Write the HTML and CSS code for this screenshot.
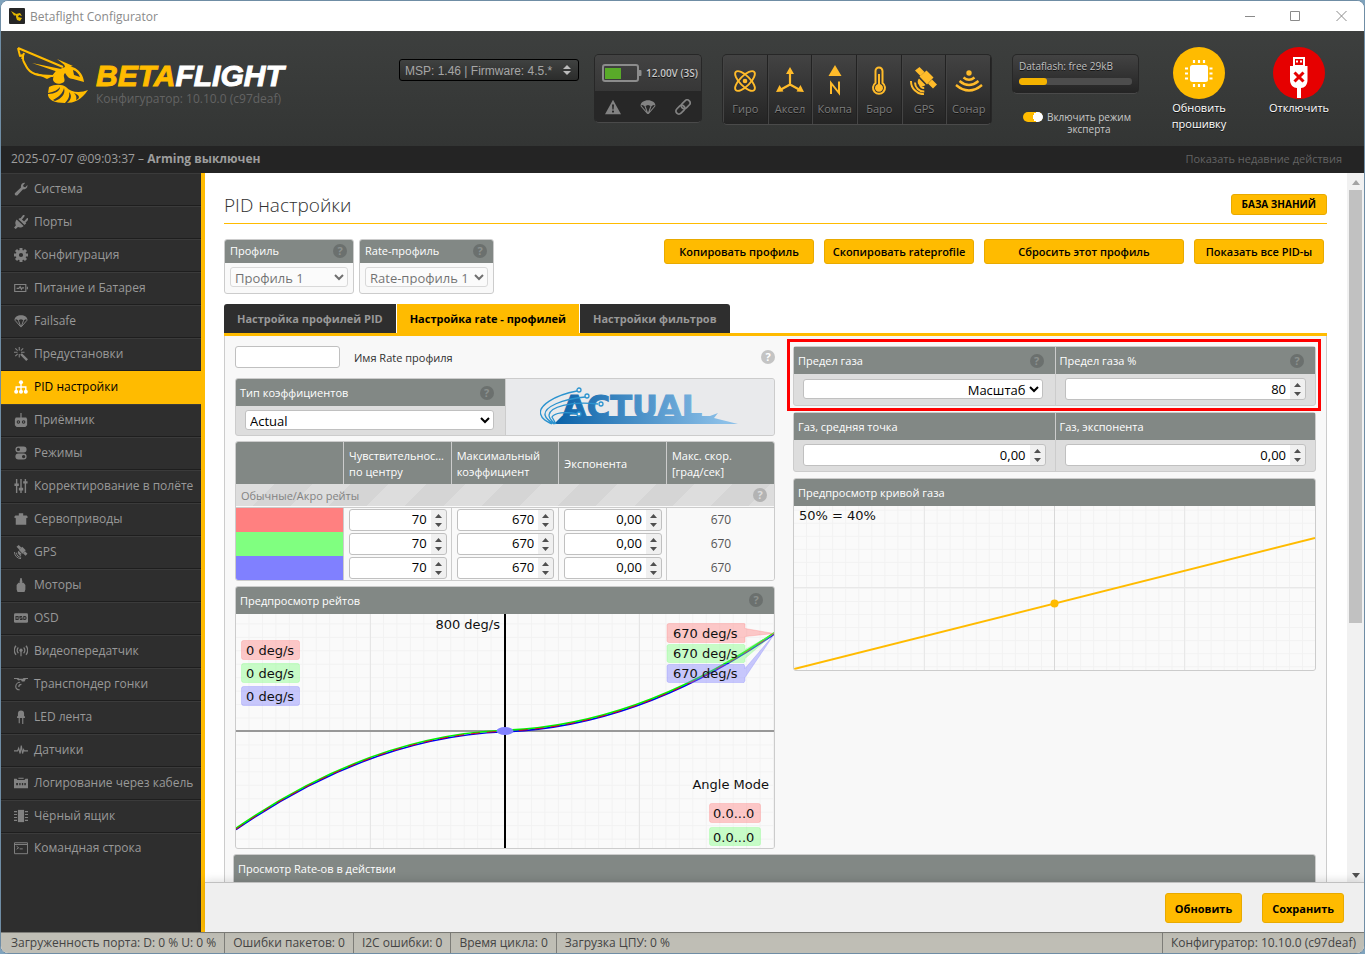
FILE: index.html
```html
<!DOCTYPE html>
<html lang="ru">
<head>
<meta charset="utf-8">
<title>Betaflight Configurator</title>
<link rel="stylesheet" href="styles.css">
</head>
<body>
<svg class="defs" aria-hidden="true">
  <defs>
    <symbol id="bee" viewBox="0 0 72 58">
      <path fill="none" stroke="#ffbb00" stroke-width="2" stroke-linejoin="round" d="M1 1 L46 20 M1 1 L3 9 L6 8 C5 15 8 16 9 19 C13 27 20 29 36 29 L40 24 M7 6 L5 12"/>
      <path fill="#ffbb00" d="M15 16 L44 22 L44 26 Z M34 30 L18 26 L30 32 Z M47 17 L58 21 C63 24 66 28 67 35 L56 32 C52 32 50 29 48 26 C45 29 49 32 47 35 C43 38 37 37 36 33 C36 27 41 22 48 20 Z M40 12 L56 19 L50 20 Z"/>
      <path fill="#383a39" d="M56 23 C59 24 62 27 63 30 L57 28 Z"/>
      <path fill="#ffbb00" d="M32 40 C38 37 45 37 49 40 C54 46 64 46 71 43 C64 53 58 56 48 56 C38 56 30 53 31 46 Z"/>
      <path fill="#383a39" d="M31 46 C37 45 41 43 43 40 C43 44 38 47 31 47 Z M36 53 C42 50 46 46 47 41 C49 47 44 52 38 54 Z M48 56 C51 53 53 49 52 45 C56 49 53 54 50 56 Z M59 53 C60 50 59 48 57 46 C62 48 63 50 61 52 Z"/>
    </symbol>
    <symbol id="i-wrench" viewBox="0 0 16 16"><path d="M1.2 12.6 8 6.2C7.300 3.200 9.500.6 12.700 1L10.400 3.600l.5 1.900 2 .4L15.300 3.500c.6 3.200-2 5.500-5 4.900L4 15C2.300 16.200-.2 14.400 1.200 12.600z"/></symbol>
    <symbol id="i-plug" viewBox="0 0 16 16"><path d="M3 5l8 7.500c-2 2-4.500 2.300-6.500 1.300L2 16l-2-1.500 2.200-2.700C1 9.500 1.300 7 3 5z"/><path d="M7.500 5.500 11 1M11.500 9 15.500 4.500" stroke="currentColor" stroke-width="2.200" stroke-linecap="round"/><path d="M5 4.500l7 7 2-2-7-6z"/></symbol>
    <symbol id="i-gear" viewBox="0 0 16 16"><circle cx="8" cy="8" r="4.200" fill="none" stroke="currentColor" stroke-width="3.600"/><path d="M8 0v3M8 13v3M0 8h3M13 8h3M2.300 2.300l2.200 2.200M11.500 11.500l2.200 2.200M13.700 2.300l-2.200 2.200M4.500 11.500l-2.200 2.200" stroke="currentColor" stroke-width="3.400"/></symbol>
    <symbol id="i-batt" viewBox="0 0 16 16"><path fill="none" stroke="currentColor" stroke-width="1.300" d="M.8 4h12.700v8H.8zM15.300 6.500v3M3 8.500h2.500L7 6.500l1.500 3 1-1.700h2"/></symbol>
    <symbol id="i-chute" viewBox="0 0 16 16"><path d="M.5 7C.5 3.500 4 1.300 8 1.300S15.500 3.500 15.500 7l-2-1-2.200 1.200L8 6 4.700 7.200 2.500 6z"/><path fill="none" stroke="currentColor" stroke-width="1.100" d="M1 7l6.500 7.500h1L15 7M5 7l2.700 7.500M11 7l-2.700 7.500"/></symbol>
    <symbol id="i-wand" viewBox="0 0 16 16"><path d="M8 8l7 7" stroke="currentColor" stroke-width="2.800"/><path d="M6 0v4M0 6h4M1.500 1.500l2.700 2.700M10.500 1.500 7.800 4.200M1.500 10.500l2.700-2.700M6 8v4M8 6h4" stroke="currentColor" stroke-width="1.200"/></symbol>
    <symbol id="i-tree" viewBox="0 0 16 16"><path fill="none" stroke="currentColor" stroke-width="1.600" d="M8 4v8M2.500 12V8h11v4"/><circle cx="8" cy="2.500" r="2.300"/><circle cx="2.500" cy="13.300" r="2.300"/><circle cx="8" cy="13.300" r="2.300"/><circle cx="13.500" cy="13.300" r="2.300"/></symbol>
    <symbol id="i-rx" viewBox="0 0 16 16"><path fill-rule="evenodd" d="M7.300 0h1.400v5H14l1 2v7l-2 2H3l-2-2V7l1-2h5.300zM5 8.300a2 2 0 1 0 0 4 2 2 0 0 0 0-4zm6 0a2 2 0 1 0 0 4 2 2 0 0 0 0-4z"/><circle cx="5" cy="10.300" r=".8"/><circle cx="11" cy="10.300" r=".8"/></symbol>
    <symbol id="i-modes" viewBox="0 0 16 16"><path fill-rule="evenodd" d="M5 .5h6a3.400 3.400 0 0 1 0 6.800H5A3.400 3.400 0 0 1 5 .5zm0 1.500a1.900 1.900 0 1 0 0 3.800A1.900 1.900 0 0 0 5 2zM5 8.700h6a3.400 3.400 0 0 1 0 6.800H5a3.400 3.400 0 0 1 0-6.800zm6 1.500a1.900 1.900 0 1 0 0 3.800 1.900 1.900 0 0 0 0-3.800z"/></symbol>
    <symbol id="i-sliders" viewBox="0 0 16 16"><path d="M3 0v16M8 0v16M13 0v16" stroke="currentColor" stroke-width="1.600"/><path d="M.5 5h5v3h-5zM5.500 10h5v3h-5zM10.500 2.500h5v2.500h-5z"/></symbol>
    <symbol id="i-servo" viewBox="0 0 16 16"><path d="M5.500 1.500h5V4h4L16 6l-2 1v7.500H2V7L0 6l1.500-2h4z"/></symbol>
    <symbol id="i-sat" viewBox="0 0 28 28"><path d="M5 3.500 9.500 0l5 5-4 4zM18 16.500l4-4 5 5-4 4z"/><path d="M9.500 9.500 16.500 3.500l7 7L17 17.500z"/><path fill="none" stroke="currentColor" stroke-width="2" d="M10 17a4 4 0 0 0 4.200 4M5 15.500a9 9 0 0 0 9.300 9M1 14a13 13 0 0 0 13 13.200"/><path d="M9 11.500l6.500 6.500a4.500 4.500 0 0 1-6.500-6.500z"/></symbol>
    <symbol id="i-motor" viewBox="0 0 16 16"><path d="M7.300 0h1.400l1 4.500-.7 1h2L13 8v5l-1 3H4l-1-3V8l2-2.500h2l-.7-1z"/></symbol>
    <symbol id="i-osd" viewBox="0 0 16 16"><rect y="2.500" width="16" height="11" rx="1.500"/><path fill="none" stroke="#2e2e2e" stroke-width="1.200" d="M2.300 6.200h2.400v3.600H2.300zM9.200 6.200H6.800V8h2.400v1.800H6.800M11.200 6.200h1.500l1 1v1.600l-1 1h-1.500z"/></symbol>
    <symbol id="i-vtx" viewBox="0 0 16 16"><circle cx="8" cy="7" r="1.800"/><path fill="none" stroke="currentColor" stroke-width="1.400" d="M8 7v7M5 4a4.500 4.500 0 0 0 0 6.500M11 4a4.500 4.500 0 0 1 0 6.500M2.300 2a8 8 0 0 0 0 10.500M13.700 2a8 8 0 0 1 0 10.500"/></symbol>
    <symbol id="i-race" viewBox="0 0 16 16"><path d="M0 1h5l1 1h4l1-1h5v1.300h-2.500L12 5H9L8 3.500 5 4 3 2.300H0z"/><path fill="none" stroke="currentColor" stroke-width="1.300" d="M7 6a5 5 0 0 0-5 5c0 2 2 4 4.500 3.500M8.500 8.500a3 3 0 0 0-3 3"/></symbol>
    <symbol id="i-led" viewBox="0 0 16 16"><path d="M4.500 7V4a3.500 3.500 0 0 1 7 0v3h1v2h-9V7z"/><path d="M6 9v6M10 9v7" stroke="currentColor" stroke-width="1.300"/></symbol>
    <symbol id="i-pulse" viewBox="0 0 16 16"><path fill="none" stroke="currentColor" stroke-width="1.300" d="M0 9h4l1.300-3L7 12 8.300 3l1.500 9 1.200-4.500.7 1.500H16"/></symbol>
    <symbol id="i-log" viewBox="0 0 16 16"><path fill-rule="evenodd" d="M0 3h3l1 1.500h8L13 3h3v11H0zM2.500 8v2.500h2V8zm3.500 0v2.500h1.500V8zm3 0v2.500h1.500V8zm2.800 0v2.500h1.700V8z"/><path d="M5 2h6v1.200H5z"/></symbol>
    <symbol id="i-chip" viewBox="0 0 16 16"><path d="M4.500 1h7v14h-7z"/><path stroke="currentColor" stroke-width="1.200" d="M0 3h3.500M0 6.300h3.500M0 9.600h3.500M0 13h3.500M12.500 3H16M12.500 6.300H16M12.500 9.600H16M12.500 13H16"/></symbol>
    <symbol id="i-cli" viewBox="0 0 16 16"><path fill="none" stroke="currentColor" stroke-width="1.100" d="M.6 2h14.800v12.500H.6zM.6 4h14.800M3 6l2.300 1.700L3 9.400M6.500 9h3.500"/></symbol>
    <symbol id="i-warn" viewBox="0 0 16 16"><path fill-rule="evenodd" d="M8 .7 16 15.300H0zM7 5.500l.4 5h1.200l.4-5zM8 11.500a1.100 1.100 0 1 0 0 2.200 1.100 1.100 0 0 0 0-2.200z"/></symbol>
    <symbol id="i-link" viewBox="0 0 16 16"><g fill="none" stroke="currentColor" stroke-width="1.700" transform="rotate(-45 8 8)"><rect x="-.8" y="5" width="10" height="6" rx="3"/><rect x="6.800" y="5" width="10" height="6" rx="3"/></g></symbol>
    <linearGradient id="actual-fill" gradientUnits="userSpaceOnUse" x1="15" y1="0" x2="185" y2="0"><stop offset="0" stop-color="#0a62a8"/><stop offset="1" stop-color="#8cc0e8"/></linearGradient>
    <pattern id="grid-rate" width="13.450" height="13.450" patternUnits="userSpaceOnUse" y="9.400"><path d="M13 0V13.450M0 .5H13.450" stroke="#f2f2f2" fill="none"/></pattern>
    <pattern id="grid-throttle" width="13.050" height="13.050" patternUnits="userSpaceOnUse" y="3.700"><path d="M12.500 0V13.050M0 .5H13.050" stroke="#f2f2f2" fill="none"/></pattern>
  </defs>
</svg>

<div class="window">
  <div class="titlebar">
    <svg class="app-icon" viewBox="0 0 16 16"><rect width="16" height="16" rx="1" fill="#262626"/><path d="M2 3l7 4-4 .5zM7 6l4-1 2 3-3-1-1 2 4 1-2 3-3-1-1-3z" fill="#e5b800"/></svg>
    <span class="app-name">Betaflight Configurator</span>
    <svg class="win-controls" viewBox="0 0 104 12"><path fill="none" stroke="#8a8a8a" d="M0 6.500h10M45.500 1.500h9v9h-9zM91.500 1l10 10M101.500 1l-10 10"/></svg>
  </div>

  <header class="header">
    <div class="logo">
      <svg class="bee"><use href="#bee"/></svg>
      <div class="brand">
        <div class="wordmark"><span class="gold">BETA</span>FLIGHT</div>
        <div class="version">Конфигуратор: 10.10.0 (c97deaf)</div>
      </div>
    </div>
    <select class="port" aria-label="Порт"><option>MSP: 1.46 | Firmware: 4.5.*</option></select>
    <div class="battery">
      <div class="battery-top">
        <svg class="batt-icon" viewBox="0 0 40 18"><rect x="1" y="1" width="35" height="16" rx="2" fill="none" stroke="#8c8c8c" stroke-width="2"/><path d="M37 6h1.500a1 1 0 0 1 1 1v4a1 1 0 0 1-1 1H37z" fill="#8c8c8c"/><rect x="3" y="4" width="16" height="11" fill="#59aa29"/></svg>
        <span>12.00V (3S)</span>
      </div>
      <div class="battery-bottom">
        <svg><use href="#i-warn"/></svg><svg><use href="#i-chute"/></svg><svg><use href="#i-link"/></svg>
      </div>
    </div>
    <div class="sensors">
      <div class="sensor"><svg viewBox="0 0 28 28"><g fill="none" stroke="currentColor" stroke-width="2"><ellipse cx="14" cy="14" rx="14" ry="5.500" transform="rotate(45 14 14)"/><ellipse cx="14" cy="14" rx="14" ry="5.500" transform="rotate(-45 14 14)"/></g><circle cx="14" cy="14" r="2.500"/></svg><span>Гиро</span></div>
      <div class="sensor"><svg viewBox="0 0 28 28"><path fill="none" stroke="currentColor" stroke-width="2.200" d="M14 5v12.500L4 23M14 17.500 24 23"/><path d="M14 0l4 7h-8zM0 25l3.500-7 4 6.500zM28 25l-3.500-7-4 6.500z"/></svg><span>Аксел</span></div>
      <div class="sensor"><svg viewBox="0 0 28 28"><path d="M14-2l6.500 11h-13z"/><path d="M10 27V16l8 10V14.500" fill="none" stroke="currentColor" stroke-width="2"/></svg><span>Компа</span></div>
      <div class="sensor"><svg viewBox="0 0 28 28"><path fill="none" stroke="currentColor" stroke-width="2" d="M10.500 16V4a3.500 3.500 0 0 1 7 0v12a6 6 0 1 1-7 0z"/><path d="M13 7h2v10a4 4 0 1 1-2 0z"/></svg><span>Баро</span></div>
      <div class="sensor"><svg><use href="#i-sat"/></svg><span>GPS</span></div>
      <div class="sensor"><svg viewBox="0 0 28 28"><circle cx="14" cy="6" r="2.700"/><path fill="none" stroke="currentColor" stroke-width="2.300" d="M8.500 10.500q5.500 4.500 11 0M4.500 14q9.500 8 19 0M1 18q13 11 26 0"/></svg><span>Сонар</span></div>
    </div>
    <div class="flash-col">
      <div class="dataflash"><span>Dataflash: free 29kB</span><div class="flash-bar"><div class="flash-fill"></div></div></div>
      <div class="expert"><input id="expert" class="toggle" type="checkbox" checked><label for="expert">Включить режим эксперта</label></div>
    </div>
    <div class="connect">
      <a href="#" class="big-btn">
        <svg viewBox="0 0 52 52"><circle cx="26" cy="26" r="26" fill="#ffbb00"/><g fill="#fff"><rect x="17" y="18" width="18" height="17" rx="2.500"/><path stroke="#fff" stroke-width="2.200" d="M21 13v3M26 13v3M31 13v3M21 37v3M26 37v3M31 37v3M12 21.500h3M12 26.500h3M12 31.500h3M36.500 21.500h3M36.500 26.500h3M36.500 31.500h3"/></g></svg>
        <span>Обновить прошивку</span>
      </a>
      <a href="#" class="big-btn">
        <svg viewBox="0 0 52 52"><circle cx="26" cy="26" r="26" fill="#e60000"/><path fill="#fff" fill-rule="evenodd" d="M20 10h12v9h2.500v14c0 5-3 8-6.500 8v10h-4V41c-3.500 0-7-3-7-8V19h3zM22 12v6h8v-6z"/><path fill="#fff" d="M23 13.500h2v2h-2zM27 13.500h2v2h-2z"/><path d="M21.500 25.500l9 9M30.500 25.500l-9 9" stroke="#e60000" stroke-width="3"/></svg>
        <span>Отключить</span>
      </a>
    </div>
  </header>

  <div class="logbar"><div>2025-07-07 @09:03:37 – <b>Arming выключен</b></div><a href="#">Показать недавние действия</a></div>

  <div class="main">
    <nav class="sidebar">
      <a href="#"><svg><use href="#i-wrench"/></svg>Система</a>
      <a href="#"><svg><use href="#i-plug"/></svg>Порты</a>
      <a href="#"><svg><use href="#i-gear"/></svg>Конфигурация</a>
      <a href="#"><svg><use href="#i-batt"/></svg>Питание и Батарея</a>
      <a href="#"><svg><use href="#i-chute"/></svg>Failsafe</a>
      <a href="#"><svg><use href="#i-wand"/></svg>Предустановки</a>
      <a href="#" class="active"><svg><use href="#i-tree"/></svg>PID настройки</a>
      <a href="#"><svg><use href="#i-rx"/></svg>Приёмник</a>
      <a href="#"><svg><use href="#i-modes"/></svg>Режимы</a>
      <a href="#"><svg><use href="#i-sliders"/></svg>Корректирование в полёте</a>
      <a href="#"><svg><use href="#i-servo"/></svg>Сервоприводы</a>
      <a href="#"><svg><use href="#i-sat"/></svg>GPS</a>
      <a href="#"><svg><use href="#i-motor"/></svg>Моторы</a>
      <a href="#"><svg><use href="#i-osd"/></svg>OSD</a>
      <a href="#"><svg><use href="#i-vtx"/></svg>Видеопередатчик</a>
      <a href="#"><svg><use href="#i-race"/></svg>Транспондер гонки</a>
      <a href="#"><svg><use href="#i-led"/></svg>LED лента</a>
      <a href="#"><svg><use href="#i-pulse"/></svg>Датчики</a>
      <a href="#"><svg><use href="#i-log"/></svg>Логирование через кабель</a>
      <a href="#"><svg><use href="#i-chip"/></svg>Чёрный ящик</a>
      <a href="#"><svg><use href="#i-cli"/></svg>Командная строка</a>
    </nav>

    <div class="page">
      <div class="scroller">
        <div class="content">
          <div class="title-row"><h1>PID настройки</h1><a href="#" class="wiki">БАЗА ЗНАНИЙ</a></div>

          <div class="top-row">
            <div class="profile">
              <label class="box-head" for="profile">Профиль<span class="help">?</span></label>
              <div class="profile-body"><select id="profile" disabled><option>Профиль 1</option></select></div>
            </div>
            <div class="profile rate">
              <label class="box-head" for="rate-profile">Rate-профиль<span class="help">?</span></label>
              <div class="profile-body"><select id="rate-profile" disabled><option>Rate-профиль 1</option></select></div>
            </div>
            <div class="actions">
              <button class="btn w150">Копировать профиль</button>
              <button class="btn w150">Скопировать rateprofile</button>
              <button class="btn w200">Сбросить этот профиль</button>
              <button class="btn w130">Показать все PID-ы</button>
            </div>
          </div>

          <div class="tabs">
            <button class="tab">Настройка профилей PID</button>
            <button class="tab current">Настройка rate - профилей</button>
            <button class="tab">Настройки фильтров</button>
          </div>

          <div class="panel">
            <div class="columns">
              <div class="col">
                <div class="name-row"><input id="rate-name" type="text"><label for="rate-name">Имя Rate профиля</label><span class="help light">?</span></div>
                <div class="box rate-type">
                  <div class="type-half">
                    <label class="box-head tall" for="rates-type">Тип коэффициентов<span class="help">?</span></label>
                    <div class="type-body"><select id="rates-type"><option>Actual</option></select></div>
                  </div>
                  <div class="type-logo">
                    <svg viewBox="0 0 200 40" width="200" height="40">
                      <path d="M14 37L22 29H170l8-3-4 5 24 6z" fill="url(#actual-fill)"/>
                      <text class="actual-text" x="22" y="31" fill="url(#actual-fill)" stroke="url(#actual-fill)">ACTUAL</text>
                      <g fill="none" stroke="#2b93cf" stroke-width="1.300"><path d="M37 4C15 8-3 19 1 28c1 4 5 6 11 9M45 10C22 12 4 20 5 28c1 4 4 6 9 9M58 17C30 14 10 20 9 28c0 4 3 6 6 9M37 27C26 24 14 26 12 30l4 7"/><g fill="#e9eaec"><circle cx="39" cy="3" r="2"/><circle cx="47" cy="9" r="2"/><circle cx="61" cy="17" r="2"/><circle cx="39" cy="27" r="2"/></g></g>
                    </svg>
                  </div>
                </div>

                <div class="box">
                  <table class="rates">
                    <thead>
                      <tr><th></th><th>Чувствительнос...<br>по центру</th><th>Максимальный<br>коэффициент</th><th>Экспонента</th><th>Макс. скор.<br>[град/сек]</th></tr>
                    </thead>
                    <tbody>
                      <tr class="stripe"><td colspan="5"><div class="stripe-in">Обычные/Акро рейты<span class="help light">?</span></div></td></tr>
                      <tr><td class="roll"></td><td><input class="num" aria-label="Roll чувствительность" value="70"></td><td><input class="num" aria-label="Roll максимум" value="670"></td><td><input class="num" aria-label="Roll экспонента" value="0,00"></td><td class="max">670</td></tr>
                      <tr><td class="pitch"></td><td><input class="num" aria-label="Pitch чувствительность" value="70"></td><td><input class="num" aria-label="Pitch максимум" value="670"></td><td><input class="num" aria-label="Pitch экспонента" value="0,00"></td><td class="max">670</td></tr>
                      <tr><td class="yaw"></td><td><input class="num" aria-label="Yaw чувствительность" value="70"></td><td><input class="num" aria-label="Yaw максимум" value="670"></td><td><input class="num" aria-label="Yaw экспонента" value="0,00"></td><td class="max">670</td></tr>
                    </tbody>
                  </table>
                </div>

                <div class="box">
                  <div class="box-head tall">Предпросмотр рейтов<span class="help">?</span></div>
                  <svg class="chart" viewBox="0 0 538 234">
                    <rect width="538" height="234" fill="#fafafa"/>
                    <rect width="538" height="234" fill="url(#grid-rate)"/>
                    <path d="M134.500 0v234M403.500 0v234" stroke="#e6e6e6"/>
                    <path d="M0 117h538" stroke="#989898" stroke-width="2"/>
                    <path d="M269 0v234" stroke="#000" stroke-width="2"/>
                    <g fill="none" stroke-width="1.600">
                      <path stroke="#0000f0" d="M0 215.700Q134.500 122.800 269 117.700Q403.500 112.600 538 20.200"/>
                      <path stroke="#00f000" d="M0 214.300Q134.500 121.400 269 116.300Q403.500 111.200 538 18.800"/>
                      <path stroke="#e00020" stroke-width="1" stroke-dasharray="9 7" d="M0 215.200Q134.500 122.300 269 117.200Q403.500 112.100 538 19.700"/>
                    </g>
                    <ellipse cx="269" cy="117" rx="8.500" ry="4" fill="#8080ff"/>
                    <g stroke-opacity=".3" fill-opacity=".42">
                      <g fill="#ff8080" stroke="#ff8080"><rect x="5.500" y="26.500" width="58" height="19" rx="2"/><path d="M433 9.500h75q1 0 1 1v4l29 5-29 3v5q0 1-1 1h-75q-2 0-2-2v-15q0-2 2-2z"/><rect x="473.500" y="189.500" width="51" height="19" rx="2"/></g>
                      <g fill="#80ff80" stroke="#80ff80"><rect x="5.500" y="49.500" width="58" height="19" rx="2"/><path d="M433 30.500h75l1 1v4l29-16-29 25v3l-1 1h-75q-2 0-2-2v-14q0-2 2-2z"/><rect x="473.500" y="213.500" width="51" height="18" rx="2"/></g>
                      <g fill="#8080ff" stroke="#8080ff"><rect x="5.500" y="72.500" width="58" height="19" rx="2"/><path d="M433 50.500h75l1 2v2l29-34-29 43v3l-1 2h-75q-2 0-2-2v-14q0-2 2-2z"/></g>
                    </g>
                    <g class="chart-text"><text x="264" y="15" text-anchor="end">800 deg/s</text><text x="10" y="41">0 deg/s</text><text x="10" y="64">0 deg/s</text><text x="10" y="87">0 deg/s</text><text x="437" y="24">670 deg/s</text><text x="437" y="44">670 deg/s</text><text x="437" y="64">670 deg/s</text><text x="533" y="175" text-anchor="end">Angle Mode</text><text x="477" y="204">0.0...0</text><text x="477" y="228">0.0...0</text></g>
                  </svg>
                </div>
              </div>

              <div class="col right">
                <div class="box pair marked">
                  <div class="cell"><label class="box-head tall" for="limit-type">Предел газа<span class="help">?</span></label><div class="cell-body"><select id="limit-type"><option>Масштаб</option></select></div></div>
                  <div class="cell"><label class="box-head tall" for="limit-pct">Предел газа %<span class="help">?</span></label><div class="cell-body"><input id="limit-pct" class="num" value="80"></div></div>
                </div>
                <div class="box pair">
                  <div class="cell"><label class="box-head tall" for="mid">Газ, средняя точка</label><div class="cell-body"><input id="mid" class="num" value="0,00"></div></div>
                  <div class="cell"><label class="box-head tall" for="expo">Газ, экспонента</label><div class="cell-body"><input id="expo" class="num" value="0,00"></div></div>
                </div>
                <div class="box">
                  <div class="box-head tall">Предпросмотр кривой газа</div>
                  <svg class="chart" viewBox="0 0 521 164">
                    <rect width="521" height="164" fill="#fafafa"/>
                    <rect width="521" height="164" fill="url(#grid-throttle)"/>
                    <path d="M130.500 0v164M390.500 0v164M0 81.500h521" stroke="#e8e8e8"/><path d="M260.500 0v164" stroke="#d8d8d8"/>
                    <path d="M0 163 521 32" stroke="#ffbb00" stroke-width="2"/><circle cx="260.500" cy="97.500" r="4" fill="#ffbb00"/>
                    <text class="chart-text" x="5" y="14">50% = 40%</text>
                  </svg>
                </div>
              </div>
            </div>
            <div class="box preview"><div class="box-head tall">Просмотр Rate-ов в действии</div><div class="preview-body"></div></div>
          </div>
        </div>
        <div class="scrollbar"><i class="up"></i><div class="thumb"></div><i class="down"></i></div>
      </div>
      <div class="toolbar"><button class="btn save">Обновить</button><button class="btn save">Сохранить</button></div>
    </div>
  </div>

  <footer class="statusbar">
    <span>Загруженность порта: D: 0 % U: 0 %</span><span>Ошибки пакетов: 0</span><span>I2C ошибки: 0</span><span>Время цикла: 0</span><span>Загрузка ЦПУ: 0 %</span><span class="last">Конфигуратор: 10.10.0 (c97deaf)</span>
  </footer>
</div>
</body>
</html>
```
FILE: styles.css
```css
* { box-sizing: border-box; }
body { margin: 0; background: #7fa3bd; font-family: "Open Sans", "Noto Sans", sans-serif; font-size: 12px; color: #303030; }
a { color: inherit; text-decoration: none; }
button, input, select { font-family: inherit; margin: 0; }
svg { fill: currentColor; }
.defs { position: absolute; width: 0; height: 0; }

.window { height: 100vh; display: flex; flex-direction: column; border: 1px solid #6f8da5; border-radius: 8px; overflow: hidden; background: #fff; }

.titlebar { flex: none; height: 30px; display: flex; align-items: center; padding: 0 15px 0 8px; background: #fff; color: #8a8a8a; }
.app-icon { width: 16px; height: 16px; margin-right: 5px; }
.app-name { flex: 1; }
.win-controls { width: 104px; height: 12px; }

.header { flex: none; height: 115px; display: flex; align-items: flex-start; padding: 16px 25px 0 16px; background: linear-gradient(#3d3f3e, #333534); }
.logo { flex: 1; display: flex; gap: 7px; }
.bee { width: 72px; height: 58px; flex: none; }
.brand { padding-top: 14px; }
.wordmark { font: italic bold 30px/30px "Liberation Sans", Arial, sans-serif; color: #fff; -webkit-text-stroke: 1px currentColor; }
.gold { color: #ffbb00; }
.version { line-height: 16px; color: #636363; white-space: nowrap; }
.port { appearance: none; width: 180px; height: 22px; margin: 12px 15px 0 0; padding: 1px 5px 0; border: 1px solid #000; border-radius: 3px; color: #a6a6a6; font: 12px "Liberation Sans", Arial, sans-serif; background: url("data:image/svg+xml,%3Csvg xmlns='http://www.w3.org/2000/svg' width='10' height='12'%3E%3Cpath d='M1 5l4-4 4 4zM1 7l4 4 4-4z' fill='%23bbb'/%3E%3C/svg%3E") no-repeat right 6px center, linear-gradient(#404241, #2b2c2b); }

.battery { width: 108px; margin: 7px 20px 0 0; border: 1px solid #272727; border-bottom-color: #4a4a4a; border-radius: 5px; overflow: hidden; }
.battery-top { height: 36px; display: flex; align-items: center; gap: 4px; padding-left: 7px; background: linear-gradient(#434343, #373737); color: #c8c8c8; font-size: 10px; font-weight: 600; white-space: nowrap; text-shadow: 0 1px #111; }
.batt-icon { width: 40px; height: 18px; flex: none; }
.battery-bottom { height: 31px; display: flex; align-items: center; justify-content: space-around; background: #272727; color: #828282; }
.battery-bottom svg { width: 16px; height: 16px; overflow: visible; }

.sensors { display: flex; width: 270px; margin: 7px 20px 0 0; border: 1px solid #272727; border-bottom-color: #4a4a4a; border-radius: 5px; background: linear-gradient(#434343, #242424); overflow: hidden; }
.sensor { flex: 1; min-width: 0; height: 69px; padding: 12px 0 0; display: flex; flex-direction: column; align-items: center; color: #ffbb2a; border-right: 1px solid #222; border-left: 1px solid #444; }
.sensor svg { width: 28px; height: 28px; overflow: visible; flex: none; }
.sensor:first-child svg { width: 26px; }
.sensor span { margin-top: 5px; line-height: 18px; color: #7d7d7d; font-size: 11px; text-shadow: 0 1px #111; }

.flash-col { width: 127px; margin: 7px 20px 0 0; }
.dataflash { height: 40px; padding: 4px 6px; border: 1px solid #272727; border-bottom-color: #4a4a4a; border-radius: 5px; background: linear-gradient(#434343, #242424); color: #c0c0c0; font-size: 10px; line-height: 15px; text-shadow: 0 1px #111; }
.flash-bar { height: 7px; margin-top: 4px; border-radius: 3px; background: #4d4d4d; overflow: hidden; }
.flash-fill { width: 25%; height: 100%; background: #f5b300; border-radius: 3px; }
.expert { display: flex; align-items: flex-start; gap: 2px; margin-top: 17px; padding-left: 11px; color: #c8c8c8; font-size: 10px; line-height: 12px; text-align: center; }
.expert label { width: 88px; }
.toggle { appearance: none; flex: none; width: 20px; height: 10px; margin-top: 1px; border-radius: 5px; background: radial-gradient(circle at 15px 5px, #fff 5px, transparent 5px), #ffbb00; }

.connect { display: flex; gap: 20px; }
.big-btn { width: 80px; display: flex; flex-direction: column; align-items: center; color: #fff; font-size: 11px; line-height: 16px; text-align: center; text-shadow: 0 1px #111; }
.big-btn svg { width: 52px; height: 52px; }
.big-btn span { margin-top: 1px; }

.logbar { flex: none; height: 27px; display: flex; justify-content: space-between; align-items: center; padding: 0 22px 2px 10px; background: #242424; color: #9d9d9d; }
.logbar a { color: #636363; font-size: 11px; }

.main { flex: 1; min-height: 0; display: flex; }
.sidebar { flex: none; width: 204px; background: #2e2e2e; border-right: 4px solid #ffbb00; overflow: hidden; }
.sidebar a { display: flex; align-items: center; gap: 6px; height: 33px; padding-left: 13px; padding-bottom: 2px; border-top: 1px solid #3b3b3b; border-bottom: 1px solid #1e1e1e; color: #999; font-size: 12px; white-space: nowrap; }
.sidebar a:last-child { height: 30px; border-bottom: 0; }
.sidebar svg { width: 14px; height: 14px; color: #828282; flex: none; }
.sidebar a.active { background: #ffbb00; border-color: #ffbb00; color: #000; }
.sidebar a.active svg { color: #fff; }

.page { flex: 1; min-width: 0; display: flex; flex-direction: column; }
.scroller { flex: 1; min-height: 0; display: flex; overflow: hidden; }
.content { flex: 1; min-width: 0; padding: 20px 20px 0 19px; }
.scrollbar { flex: none; width: 17px; display: flex; flex-direction: column; align-items: center; background: #f1f1f1; padding: 7px 0 4px; }
.scrollbar .thumb { width: 13px; height: 433px; margin: 5px 0 auto; background: #c1c1c1; }
.scrollbar i { border: 4px solid transparent; }
.scrollbar .up { border-top: 0; border-bottom: 5px solid #a3a3a3; }
.scrollbar .down { border-bottom: 0; border-top: 5px solid #505050; }

.title-row { display: flex; justify-content: space-between; align-items: flex-start; height: 31px; border-bottom: 1px solid #ffbb00; margin-bottom: 15px; }
h1 { margin: 0; font-size: 19px; font-weight: 300; line-height: 24px; color: #303030; }
.wiki { height: 21px; margin-top: 1px; padding: 0 10px; border: 1px solid #e8aa00; border-radius: 3px; background: #ffbb00; color: #000; font-size: 10px; font-weight: 700; line-height: 19px; }

.top-row { display: flex; align-items: flex-start; gap: 5px; margin-bottom: 10px; }
.profile { width: 130px; border: 1px solid #ccc; border-radius: 3px; overflow: hidden; background: #f9f9f9; }
.profile.rate { width: 135px; }
.box-head { display: flex; justify-content: space-between; align-items: center; height: 23px; padding: 0 6px 2px 5px; background: #828885; color: #fff; font-size: 11px; }
.box-head.tall { height: 27px; padding: 0 11px 0 4px; }
.help { display: inline-block; flex: none; width: 14px; height: 14px; border-radius: 7px; background: #6b706e; color: #8b918e; font-size: 11px; font-weight: 700; line-height: 14px; text-align: center; }
.help.light { background: #c4c4c4; color: #fff; }
.profile-body { height: 30px; padding: 4px 5px; }
select { height: 20px; padding: 0 0 1px; border: 1px solid #c0c0c0; border-radius: 3px; background: #fff; color: #000; font-size: 13px; }
.profile-body select { display: block; width: 100%; opacity: .55; background: #fdfdfd; }
.actions { margin-left: auto; display: flex; gap: 10px; padding-right: 3px; }
.btn { height: 25px; padding: 0; border: 1px solid #e8aa00; border-radius: 3px; background: #ffbb00; color: #000; font-size: 11px; font-weight: 600; white-space: nowrap; }
.w150 { width: 150px; } .w200 { width: 200px; } .w130 { width: 130px; }

.tabs { display: flex; gap: 1px; border-bottom: 3px solid #ffbb00; }
.tab { height: 29px; padding: 0 13px; border: 0; background: #2e2e2e; color: #999; font-size: 11px; font-weight: 700; white-space: nowrap; }
.tab:first-child { border-radius: 3px 0 0 0; }
.tab:last-child { border-radius: 0 3px 0 0; }
.tab.current { background: #ffbb00; color: #000; }

.panel { padding: 10px 10px 0; border: 1px solid #ccc; border-width: 0 1px; background: #f8f8f8; }
.columns { display: grid; grid-template-columns: minmax(0, 540fr) minmax(0, 523fr); gap: 18px; align-items: start; }
.col { display: flex; flex-direction: column; gap: 5px; }
.name-row { display: flex; align-items: center; height: 22px; margin-bottom: 5px; font-size: 11px; }
.name-row input { width: 105px; height: 22px; margin-right: 14px; border: 1px solid #c0c0c0; border-radius: 3px; }
.name-row .help { margin-left: auto; }
.box { border: 1px solid #ccc; border-radius: 3px; overflow: hidden; background: #ddd; }
.rate-type { display: flex; height: 58px; }
.type-half { flex: 1; border-right: 1px solid #ccc; }
.type-logo { flex: 1; display: flex; align-items: center; justify-content: center; background: #e9eaec; }
.actual-text { font: bold 32px "DejaVu Sans", sans-serif; stroke-width: 1px; }
.type-body { padding: 4px 11px 0 9px; }
.type-body select, .cell-body select { display: block; width: 100%; }

.rates { width: 100%; border-collapse: collapse; table-layout: fixed; background: #f9f9f9; }
.rates th { height: 42px; padding: 2px 5px 0; background: #828885; border-left: 1px solid #ccc; color: #fff; font-size: 11px; font-weight: 400; line-height: 16px; text-align: left; }
.rates th:first-child, .rates td:first-child { border-left: 0; }
.rates td { height: 24px; padding: 1px 4px 1px 5px; border-left: 1px solid #ccc; }
.rates .stripe td { height: 23px; padding: 0; border-bottom: 1px solid #ccc; }
.stripe-in { display: flex; justify-content: space-between; align-items: center; height: 22px; padding: 0 7px 0 5px; color: #828282; font-size: 11px; background: repeating-linear-gradient(135deg, #ddd 0 27px, #d5d5d5 27px 54px); }
.rates .help { background: #b3b3b3; color: #ddd; }
.rates .roll { background: #ff8080; } .rates .pitch { background: #80ff80; } .rates .yaw { background: #8080ff; }
.rates .max { text-align: center; color: #555; }
.num { display: block; width: 100%; height: 22px; padding: 0 19px 1px 2px; border: 1px solid #c0c0c0; border-radius: 3px; color: #000; font-size: 13px; text-align: right; background: url("data:image/svg+xml,%3Csvg xmlns='http://www.w3.org/2000/svg' width='15' height='20'%3E%3Cpath d='M0 0h15v20H0z' fill='%23f0f0f0'/%3E%3Cpath d='M4 8l3.500-4L11 8zM4 13l3.500 4L11 13z' fill='%23505050'/%3E%3C/svg%3E") no-repeat right center #fff; }
.chart { display: block; width: 100%; height: auto; }
.chart-text { font: 13px "DejaVu Sans", sans-serif; fill: #111; }

.right { gap: 6px; }
.pair { display: grid; grid-template-columns: 1fr 1fr; overflow: visible; }
.cell + .cell { border-left: 1px solid #ccc; }
.cell-body { height: 31px; padding: 4px 9px; }
.cell-body select { width: calc(100% - 3px); margin-top: 1px; text-align: right; text-align-last: right; }
.marked { position: relative; }
.marked::after { content: ""; position: absolute; inset: -8px -6px -6px -7px; border: 3px solid #f00; pointer-events: none; }
.preview { margin: 5px 0 0 -2px; }
.preview-body { height: 300px; background: #fafafa; }

.toolbar { position: relative; flex: none; height: 50px; display: flex; justify-content: flex-end; gap: 20px; padding: 10px 20px 0; background: #efefef; border-top: 1px solid #c0c0c0; box-shadow: 0 -2px 8px rgba(0,0,0,.12); }
.save { height: 30px; padding: 0 9px; font-weight: 700; }

.statusbar { flex: none; height: 21px; display: flex; align-items: center; border-top: 1px solid #7d7d78; background: #bfbeb5; color: #444; }
.statusbar span { height: 20px; padding: 0 8px; line-height: 20px; border-right: 1px solid #7d7d78; white-space: nowrap; }
.statusbar span:first-child { padding-left: 10px; }
.statusbar span:nth-child(5) { border: 0; }
.statusbar .last { margin-left: auto; border-right: 0; border-left: 1px solid #7d7d78; }
```
